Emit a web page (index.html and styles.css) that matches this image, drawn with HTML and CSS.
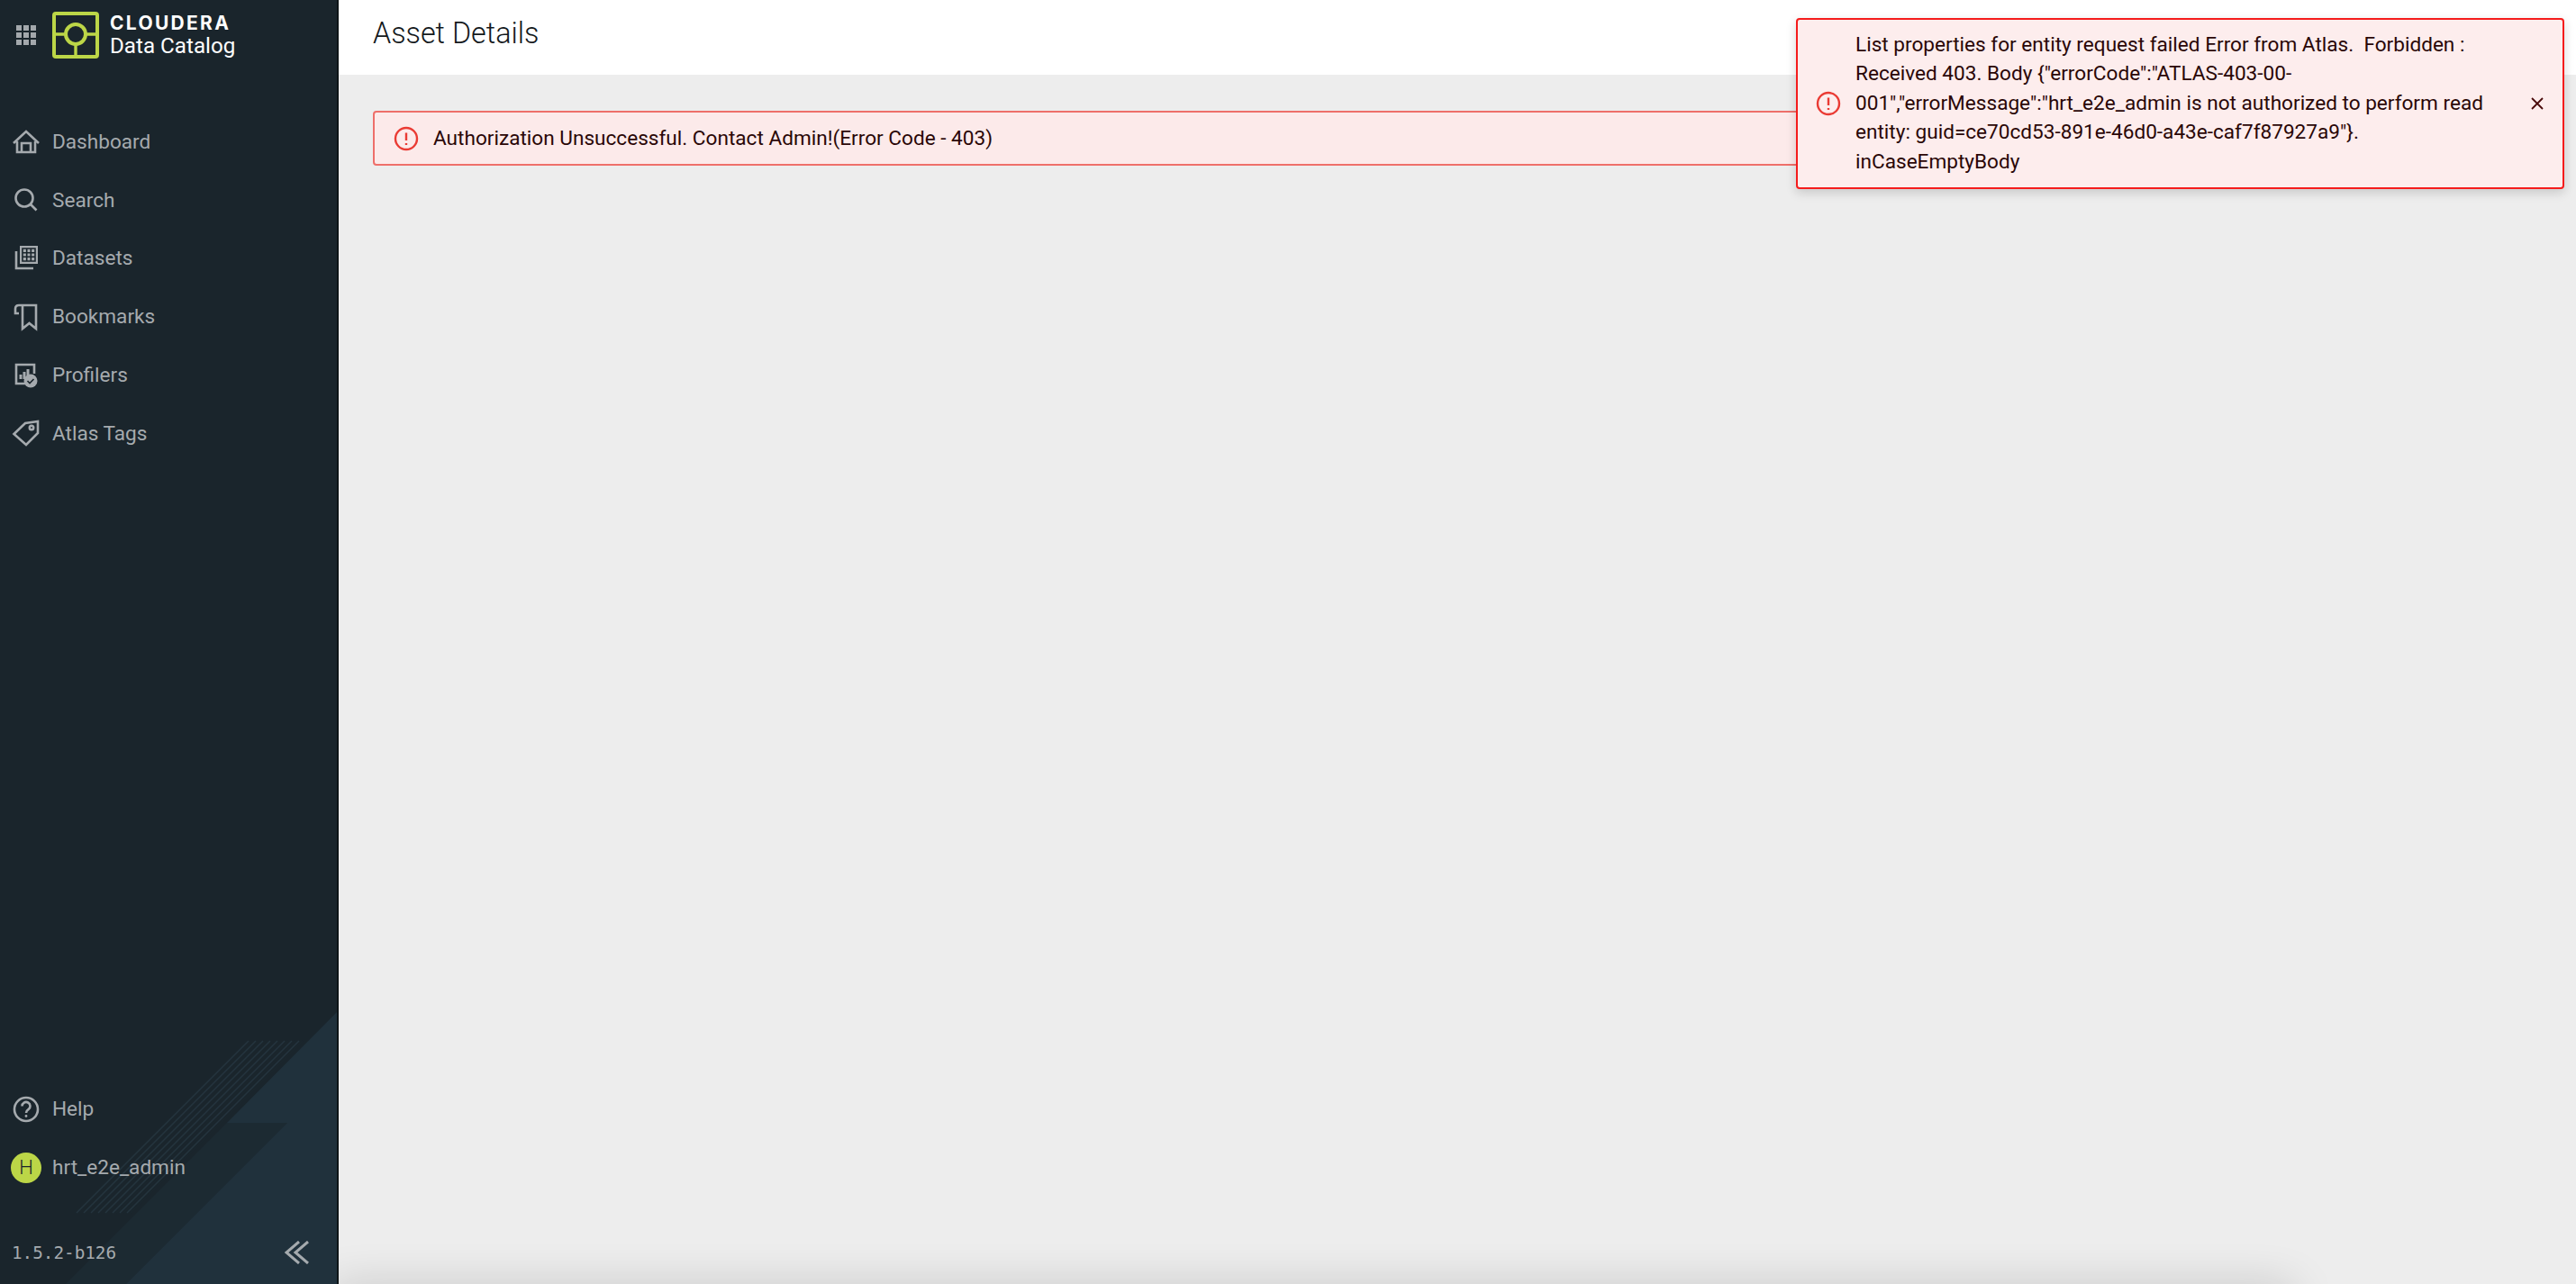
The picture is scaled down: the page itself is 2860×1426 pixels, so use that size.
FILE: index.html
```html
<!DOCTYPE html>
<html lang="en">
<head>
    <meta charset="UTF-8">
    <title>Asset Details</title>
    <link rel="stylesheet" href="styles.css">
</head>
<body>
    <div class="app">
        <aside class="sidebar">
            <svg class="decor" width="374" height="320" viewBox="0 1106 374 320">
                <polygon points="252,1247 319,1247 140,1426 73,1426" fill="#1c2a32"/>
                <polygon points="374,1124 252,1247 319,1247 140,1426 374,1426" fill="#20313c"/>
                <g stroke="#24343e" stroke-width="1.5">
                    <line x1="276" y1="1156" x2="85" y2="1347"/>
                    <line x1="284" y1="1156" x2="93" y2="1347"/>
                    <line x1="292" y1="1156" x2="101" y2="1347"/>
                    <line x1="300" y1="1156" x2="109" y2="1347"/>
                    <line x1="308" y1="1156" x2="117" y2="1347"/>
                    <line x1="316" y1="1156" x2="125" y2="1347"/>
                    <line x1="324" y1="1156" x2="133" y2="1347"/>
                    <line x1="332" y1="1156" x2="141" y2="1347"/>
                </g>
                <g stroke="#1a262d" stroke-width="1.5">
                    <line x1="320" y1="1156" x2="129" y2="1347"/>
                    <line x1="328" y1="1156" x2="137" y2="1347"/>
                    <line x1="336" y1="1156" x2="145" y2="1347"/>
                </g>
            </svg>

            <div class="brand">
                <div class="apps">
                    <i></i><i></i><i></i><i></i><i></i><i></i><i></i><i></i><i></i>
                </div>
                <svg class="logo" width="52" height="52" viewBox="0 0 52 52" fill="none" stroke="#bcd647">
                    <rect x="2" y="2" width="48" height="48" rx="2" stroke-width="4"/>
                    <path d="M3 25H14M38 25H49M26 37V49" stroke-width="3.4"/>
                    <circle cx="26" cy="25" r="11" stroke-width="4"/>
                </svg>
                <div class="brand-text">
                    <div class="company">CLOUDERA</div>
                    <div class="product">Data Catalog</div>
                </div>
            </div>

            <nav class="nav">
                <a class="nav-item">
                    <svg class="icon" viewBox="0 0 32 32"><path d="M2 18L16 5L30 18M6 16V28H26V16M11 28V18H21V28"/></svg>
                    <span>Dashboard</span>
                </a>
                <a class="nav-item">
                    <svg class="icon" viewBox="0 0 32 32"><circle cx="14" cy="14" r="9.5"/><path d="M21 21L27.5 27.5"/></svg>
                    <span>Search</span>
                </a>
                <a class="nav-item">
                    <svg class="icon" viewBox="0 0 32 32">
                        <path d="M5 8V27H24"/>
                        <rect class="solid" x="9" y="2" width="20" height="20"/>
                        <path class="cut" d="M12 5H26V19H12ZM16.7 5V19M21.3 5V19M12 9.7H26M12 14.3H26"/>
                    </svg>
                    <span>Datasets</span>
                </a>
                <a class="nav-item">
                    <svg class="icon" viewBox="0 0 32 32"><path d="M12 14V3H8Q4 3 4 7V12H8M12 3H27V29L19.5 23L12 29V14"/></svg>
                    <span>Bookmarks</span>
                </a>
                <a class="nav-item">
                    <svg class="icon" viewBox="0 0 32 32">
                        <path d="M15 25H5V4H25V14"/>
                        <path class="thin" d="M10 20V15M14 20V12M18 16V9"/>
                        <circle class="solid" cx="21" cy="22" r="7.5"/>
                        <path class="cut" d="M17.5 22L20 24.5L24.5 20"/>
                    </svg>
                    <span>Profilers</span>
                </a>
                <a class="nav-item">
                    <svg class="icon" viewBox="0 0 32 32"><path d="M2.5 17L15 5L29 3V16L16 29Z"/><circle cx="22" cy="10" r="2.2"/></svg>
                    <span>Atlas Tags</span>
                </a>
            </nav>

            <div class="nav nav-bottom">
                <a class="nav-item">
                    <svg class="icon" viewBox="0 0 32 32">
                        <circle cx="16" cy="16" r="13"/>
                        <path d="M11.5 12.5A4.5 4.5 0 1 1 18.5 16.2C17 17.2 16 18 16 20"/>
                        <circle class="solid" cx="16" cy="23.5" r="1.4"/>
                    </svg>
                    <span>Help</span>
                </a>
                <a class="nav-item">
                    <span class="avatar">H</span>
                    <span>hrt_e2e_admin</span>
                </a>
            </div>

            <div class="foot">
                <span class="version">1.5.2-b126</span>
                <svg class="collapse" width="28" height="26" viewBox="0 0 28 26"><path d="M16 1L2 13L16 25M26 1L12 13L26 25"/></svg>
            </div>
        </aside>

        <main class="main">
            <header class="topbar">
                <h1 class="title">Asset Details</h1>
            </header>
            <div class="content">
                <div class="alert">
                    <svg class="err-icon" width="28" height="28" viewBox="0 0 28 28"><circle cx="14" cy="14" r="12"/><path d="M14 7.5V16M14 19V21"/></svg>
                    <span>Authorization Unsuccessful. Contact Admin!(Error Code - 403)</span>
                </div>
            </div>
            <div class="edge-shadow"></div>
        </main>
    </div>

    <div class="toast">
        <svg class="err-icon" width="28" height="28" viewBox="0 0 28 28"><circle cx="14" cy="14" r="12"/><path d="M14 7.5V16M14 19V21"/></svg>
        <div class="toast-text">List properties for entity request failed Error from Atlas.  Forbidden : Received 403. Body {"errorCode":"ATLAS-403-00-001","errorMessage":"hrt_e2e_admin is not authorized to perform read entity: guid=ce70cd53-891e-46d0-a43e-caf7f87927a9"}. inCaseEmptyBody</div>
        <svg class="close" width="14" height="14" viewBox="0 0 14 14"><path d="M1 1L13 13M13 1L1 13"/></svg>
    </div>
</body>
</html>
```

FILE: styles.css
```css
html, body {
    margin: 0;
    height: 100%;
    overflow: hidden;
}
body {
    font-family: Roboto, "Liberation Sans", sans-serif;
    background-color: #ededed;
}
.app {
    display: flex;
    height: 1426px;
}

/* left side */
.sidebar {
    position: relative;
    display: flex;
    flex-direction: column;
    flex: 0 0 374px;
    background-color: #1a252c;
    border-right: 2px solid #0d1417;
    overflow: hidden;
}
.decor {
    position: absolute;
    left: 0;
    bottom: 0;
}
.brand {
    position: relative;
    display: flex;
    align-items: center;
    height: 78px;
    padding-left: 18px;
}
.apps {
    display: grid;
    grid-template-columns: repeat(3, 6px);
    grid-auto-rows: 6px;
    gap: 2px;
    margin-right: 18px;
}
.apps i {
    background-color: #a3a8ac;
}
.logo {
    margin-right: 12px;
}
.brand-text {
    color: #ffffff;
}
.company {
    font-family: Inter, sans-serif;
    font-weight: 700;
    font-size: 21px;
    line-height: 24px;
    letter-spacing: 2.3px;
}
.product {
    font-size: 24.2px;
    line-height: 27px;
}
.nav {
    position: relative;
    display: flex;
    flex-direction: column;
    padding-top: 47px;
}
.nav-bottom {
    margin-top: auto;
    padding-top: 0;
}
.nav-item {
    display: flex;
    align-items: center;
    gap: 13px;
    height: 64.8px;
    padding-left: 13px;
    font-size: 22.6px;
    color: #a5aaae;
}
.icon {
    width: 32px;
    height: 32px;
    fill: none;
    stroke: #a5aaae;
    stroke-width: 2.6;
}
.icon .solid {
    fill: #a5aaae;
    stroke: none;
}
.icon .cut {
    stroke: #1a252c;
    stroke-width: 1.6;
    fill: none;
}
.icon .thin {
    stroke-width: 3;
}
.avatar {
    display: flex;
    align-items: center;
    justify-content: center;
    width: 34px;
    height: 34px;
    margin: 0 -1px;
    border-radius: 50%;
    background-color: #bcd647;
    color: #1a252c;
    font-size: 22px;
    font-weight: 300;
}
.foot {
    position: relative;
    display: flex;
    align-items: center;
    justify-content: space-between;
    height: 70px;
    padding: 0 30px 0 13px;
    margin-top: 27px;
}
.version {
    font-family: "DejaVu Sans Mono", monospace;
    font-size: 19.3px;
    color: #a5aaae;
}
.collapse {
    fill: none;
    stroke: #a5aaae;
    stroke-width: 3;
}

/* right side */
.main {
    position: relative;
    flex: 1;
    overflow: hidden;
}
.topbar {
    display: flex;
    align-items: center;
    height: 83px;
    padding: 0 38px 10px;
    box-sizing: border-box;
    background-color: #ffffff;
}
.title {
    margin: 0;
    font-weight: 300;
    font-size: 32.3px;
    color: #14191c;
}
.content {
    padding: 40px 40px 0 38px;
}
.alert {
    display: flex;
    align-items: center;
    gap: 16px;
    height: 61px;
    padding-left: 21px;
    box-sizing: border-box;
    background-color: #fceaea;
    border: 2px solid #ee6f6a;
    border-radius: 4px;
    font-size: 22.6px;
    color: #2a0707;
}
.err-icon {
    flex: none;
    fill: none;
    stroke: #ea3b34;
    stroke-width: 2.4;
}
.edge-shadow {
    position: absolute;
    left: 0;
    right: 320px;
    bottom: -30px;
    height: 20px;
    box-shadow: 0 0 50px 6px rgba(0, 0, 0, 0.2);
}
.toast {
    position: absolute;
    top: 20px;
    right: 13px;
    display: flex;
    align-items: center;
    width: 853px;
    height: 190px;
    box-sizing: border-box;
    padding-left: 20px;
    background-color: #fdeded;
    border: 2px solid #f51c1c;
    border-radius: 4px;
    box-shadow: 0 4px 12px rgba(0, 0, 0, 0.16);
    font-size: 22.6px;
    line-height: 32.4px;
    color: #2a0707;
}
.toast-text {
    width: 716px;
    margin-left: 16px;
    white-space: pre-wrap;
}
.close {
    margin-left: 34px;
    fill: none;
    stroke: #4a0b0b;
    stroke-width: 1.8;
}
```
